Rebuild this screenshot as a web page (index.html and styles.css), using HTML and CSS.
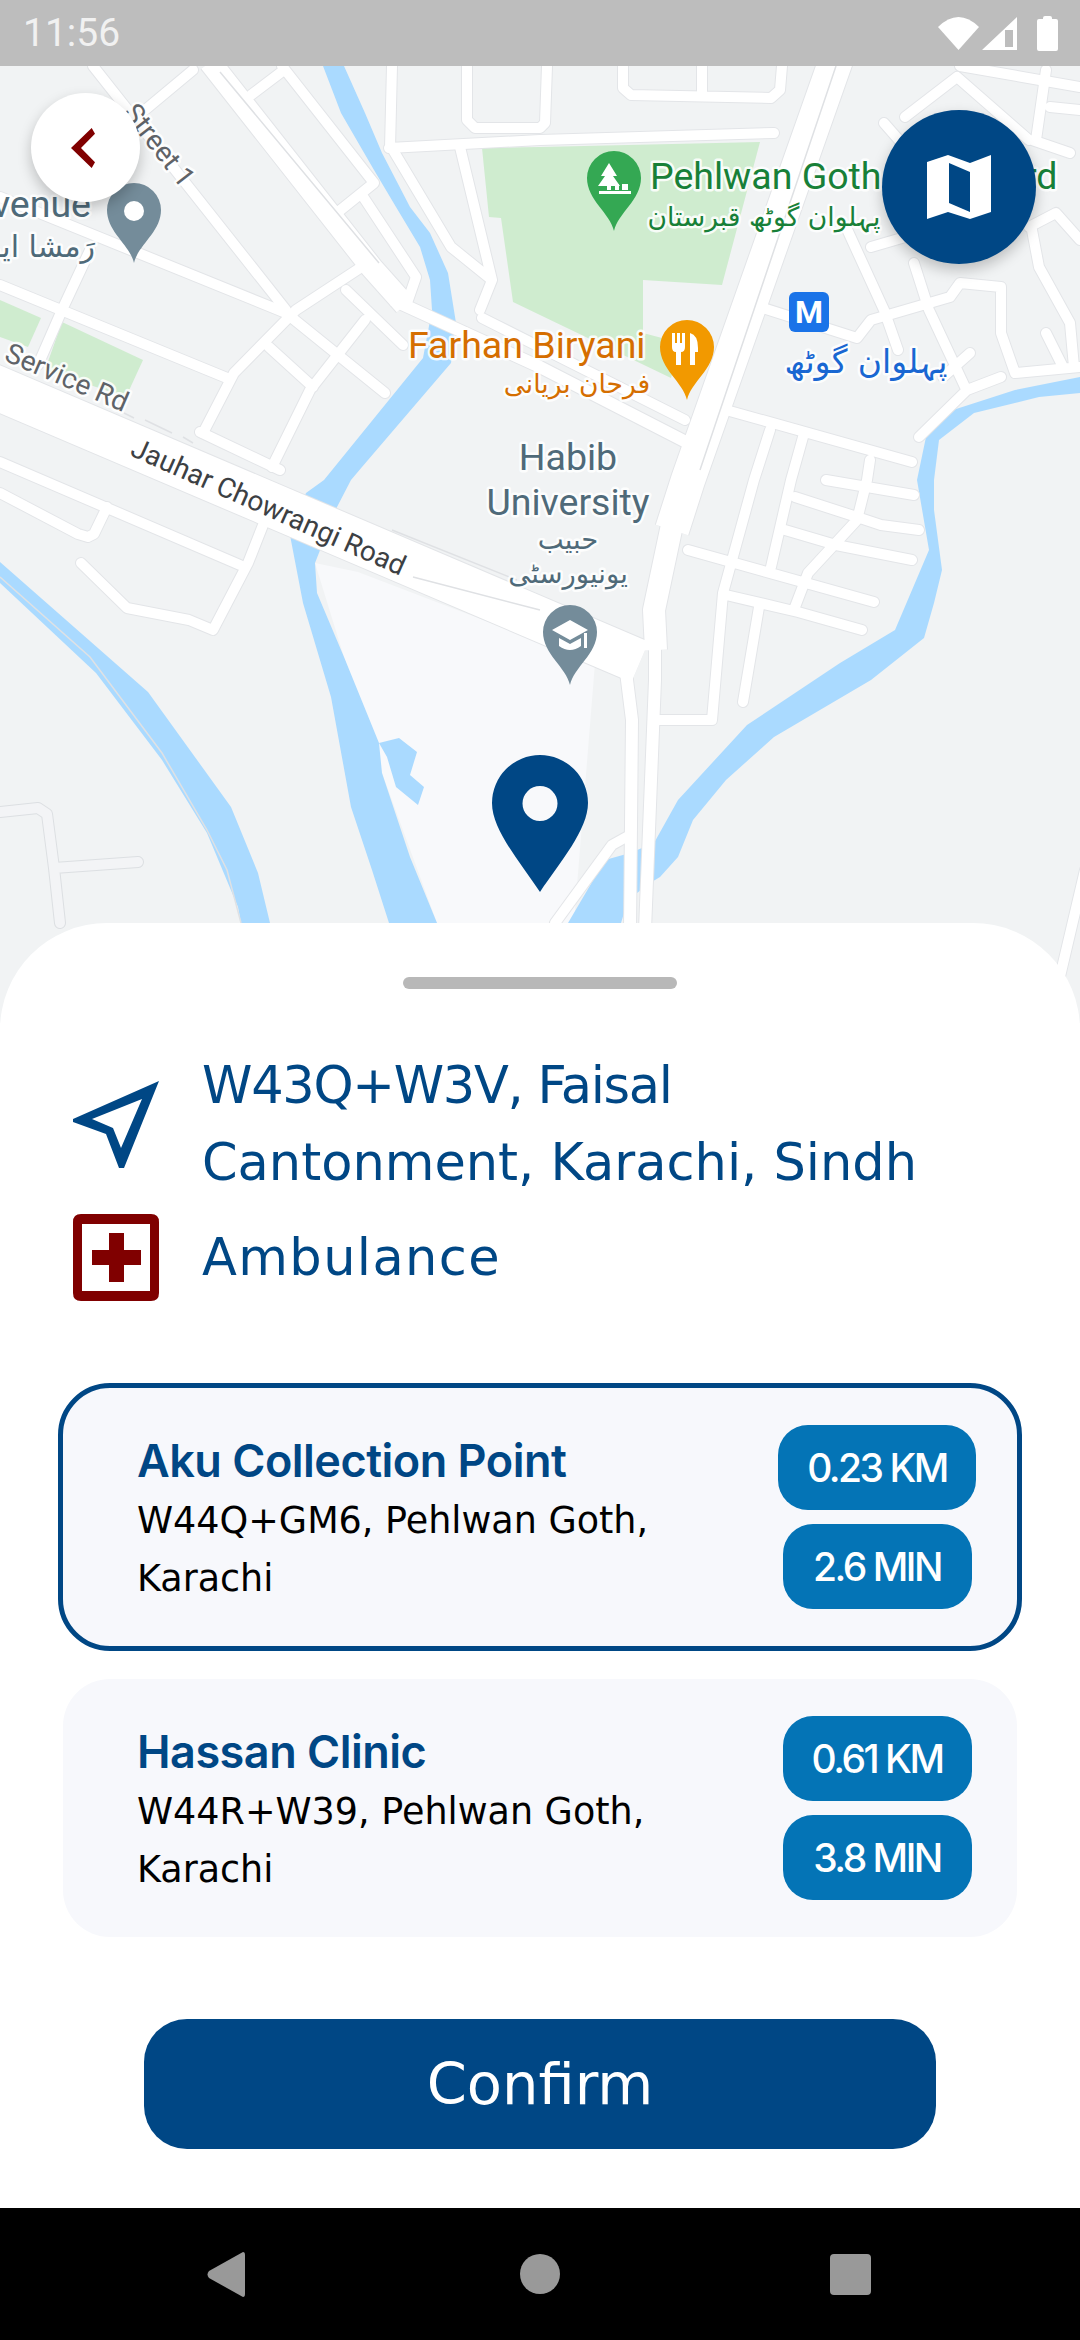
FILE: index.html
```html
<!DOCTYPE html>
<html lang="en">
<head>
<meta charset="utf-8">
<title>Select hospital</title>
<link rel="stylesheet" href="styles.css">
</head>
<body>
<div class="phone">
  <header class="status">
    <span class="time">11:56</span>
    <div class="status-icons">
      <svg class="wifi" viewBox="0 0 41 33"><path d="M0 10Q20.500-10 41 10L20.500 33Z"/></svg>
      <svg class="signal" viewBox="0 0 35 33"><path fill-rule="evenodd" d="M0 33L35 0V33ZM23 13V30H31V13Z"/></svg>
      <svg class="battery" viewBox="0 0 21 35"><path d="M6 2Q6 0 8 0H13Q15 0 15 2V3H19Q21 3 21 5V33Q21 35 19 35H2Q0 35 0 33V5Q0 3 2 3H6Z"/></svg>
    </div>
  </header>

  <section class="map">
    <svg class="map-canvas" viewBox="0 66 1080 957">
      <rect class="land" x="0" y="66" width="1080" height="957"/>
      <g class="park">
        <path d="M482 148L489 217L501 218L513 302L540 315L671 378L681 343L643 333L643 280L722 285L760 142L540 147Z"/>
        <path d="M0 300L41 318L28 347L0 337Z"/>
        <path d="M62 322L143 360L126 397L45 370Z"/>
      </g>
      <path class="campus" d="M315 563L358 572L595 663L574 923L437 923L382 773L344 657Z"/>
      <g class="water">
        <path d="M323 66L341 113L374 170L396 207L420 247L430 280L432 310L423 358L324 480L306 493L289 530L303 603L331 697L351 807L372 870L389 923L437 923L410 857L382 773L379 743L344 657L317 593L315 563L337 507L351 480L362 467L451 363L456 323L448 273L430 233L410 207L382 153L365 113L344 66Z"/>
        <path d="M379 743L399 738L417 752L410 775L424 787L418 805L396 787L387 757Z"/>
        <path d="M0 562L148 692L231 807L258 873L270 923L241 923L238 907L207 833L162 760L96 673L0 583Z"/>
        <path d="M568 923L605 860L630 853L654 843L678 800L747 725L840 663L895 630L929 550L917 480L926 437L953 410L1015 390L1080 377L1080 393L1039 397L974 413L939 440L934 480L934 510L942 570L934 603L924 638L871 680L774 737L726 780L693 820L678 857L660 877L650 883L628 900L621 923Z"/>
      </g>
      <path class="hair" d="M0 577L90 657L162 753L207 830L227 870L241 923"/>

      <g class="minor-case"><path d="M0 812L38 808L47 814L54 868L138 862M54 868L60 923"/></g>
      <g class="minor"><path d="M0 812L38 808L47 814L54 868L138 862M54 868L60 923"/></g>

      <defs>
        <g id="streets">
          <path d="M282 66L374 183M374 183L338 212M362 195L416 277L408 300M284 70L251 95"/>
          <path d="M93 66L286 310M193 70L145 110M0 197L286 313L385 393"/>
          <path d="M360 268L296 310L234 373L203 433M90 250L62 310L38 365M0 285L227 378M269 347L313 387M365 320L310 390L272 467M346 290L403 345"/>
          <path d="M0 462L240 565M0 493L78 534L88 537L94 534L107 507M265 520L248 563L213 630L189 620L127 608L81 563M200 432L280 470"/>
          <path d="M389 148L540 140L774 133M392 66L390 148M467 66L467 120L475 128L540 128L545 123L547 66M623 66L623 88L631 95L771 98L780 90L782 66M702 66L702 92"/>
          <path d="M393 150L451 247L492 280L480 310M460 147L492 280M482 318L685 420"/>
          <path d="M630 835L612 845L555 923"/>
          <path d="M770 430L754 480L723 593L712 720L657 720M803 437L791 480L771 567M688 550L874 602M726 595L798 612L862 630M759 607L743 702M795 497L857 517L881 525L919 530M785 530L836 545L912 560M826 480L914 495M867 480L857 520L808 573L795 607M726 410L912 462M870 460L867 480"/>
          <path d="M760 307L857 338L871 320L950 297L960 283L1001 287L1001 333L1015 373L1080 367M846 227L884 310L898 350M914 263L929 310L965 387M905 117L957 77L1029 140M960 66L1080 87M1046 70L1036 140M1050 107L1080 110M1032 140L1070 153M884 123L905 147M1029 227L1056 213L1080 240M1032 230L1039 267L1070 323L1074 367M1046 333L1063 367M1001 377L967 390L919 437M970 353L943 377M871 247L919 233"/>
          <path d="M1085 870L1058 985"/>
        </g>
        <path id="art12" d="M393 300L540 367L688 443M655 640L655 680L645 930M622 640L632 720L630 930"/>
        <path id="art22" d="M210 62L372 268L405 305M672 525L654 610L656 650"/>
        <path id="art34" d="M836 60L688 480L672 530"/>
        <path id="art44" d="M-10 385L640 662"/>
        <path id="pin" d="M0 53C-4 35-27 22-27 0A27 27 0 0 1 27 0C27 22 4 35 0 53Z"/>
      </defs>

      <use class="street-case" href="#streets"/>
      <use class="art-case w12" href="#art12"/>
      <use class="art-case w22" href="#art22"/>
      <use class="art-case w34" href="#art34"/>
      <use class="art-case w44" href="#art44"/>
      <use class="street" href="#streets"/>
      <use class="art w12" href="#art12"/>
      <use class="art w22" href="#art22"/>
      <use class="art w34" href="#art34"/>
      <use class="art w44" href="#art44"/>
      <path class="hair" d="M220 72L379 263M124 413L134 418M145 420L172 433M183 437L193 443M392 530L517 580M413 577L540 610M836 66L700 470"/>

      <text class="lbl road" transform="translate(122 113) rotate(52)">Street 1</text>
      <text class="lbl road" transform="translate(3 360) rotate(23.500)">Service Rd</text>
      <text class="lbl road dark" transform="translate(129 455) rotate(24)">Jauhar Chowrangi Road</text>

      <text class="lbl poi slate" x="91" y="217" text-anchor="end">Avenue</text>
      <text class="lbl ur slate wide" x="95" y="257">رَمشا ایونیو</text>

      <text class="lbl poi green" x="650" y="189">Pehlwan Goth Graveyard</text>
      <text class="lbl ur green" x="764" y="226" text-anchor="middle">پہلوان گوٹھ قبرستان</text>

      <text class="lbl poi orange" x="408" y="358">Farhan Biryani</text>
      <text class="lbl ur orange" x="577" y="393" text-anchor="middle">فرحان بریانی</text>

      <text class="lbl poi slate" x="568" y="470" text-anchor="middle">Habib</text>
      <text class="lbl poi slate" x="568" y="515" text-anchor="middle">University</text>
      <text class="lbl ur slate small" x="568" y="549" text-anchor="middle">حبیب</text>
      <text class="lbl ur slate small" x="568" y="583" text-anchor="middle">یونیورسٹی</text>

      <text class="lbl ur blue big" x="866" y="373" text-anchor="middle">پہلوان گوٹھ</text>
      <rect class="metro" x="789" y="292" width="40" height="40" rx="6"/>
      <text class="metro-m" x="809" y="323" text-anchor="middle">M</text>

      <use class="pin-grey" href="#pin" x="134" y="210"/>
      <circle class="pin-hole" cx="134" cy="211" r="10"/>

      <use class="pin-green" href="#pin" x="614" y="178"/>
      <path class="pin-hole" d="M609 163L617 176H613L620 186H611V190H607V186H598L605 176H601ZM599 191H631V194H599ZM615 184H619V190H615ZM622 184H628V190H622Z"/>

      <use class="pin-orange" href="#pin" x="687" y="347"/>
      <path class="pin-hole" d="M672 333H675V343H677V333H680V343H682V333H685V347Q685 352 681 352V365H676V352Q672 352 672 347ZM690 333Q698 335 698 348V352H695V365H690Z"/>

      <use class="pin-grey" href="#pin" x="570" y="632"/>
      <path class="pin-hole" d="M570 620L588 630L570 640L552 630ZM559 638L570 644L581 638V646Q570 654 559 646ZM584 633H587V648H584Z"/>

      <path class="pin-main" fill-rule="evenodd" d="M540 892C520 862 492 830 492 803A48 48 0 0 1 588 803C588 830 560 862 540 892ZM540 786A17.500 17.500 0 1 0 540 821A17.500 17.500 0 1 0 540 786Z"/>
    </svg>

    <button class="back-btn" type="button" aria-label="Back">
      <svg class="chev" viewBox="0 0 24 40"><path d="M0 20L20.700 0L24 5.700L10 20L24 34.300L20.700 40Z"/></svg>
    </button>
    <button class="layers-btn" type="button" aria-label="Map view">
      <svg class="map-icon" viewBox="0 0 64 64"><path fill-rule="evenodd" d="M0 7L21 0L43 8L64 0V57L43 64L21 57L0 64ZM22 8V48L43 57V17Z"/></svg>
    </button>
  </section>

  <main class="sheet">
    <div class="handle"></div>

    <div class="place place-addr">
      <svg class="nav-icon" viewBox="0 0 86 87"><path fill-rule="evenodd" d="M86 0L0 38V41L33 53L46 87H51ZM69 18L19 38L40 47L48 67Z"/></svg>
      <p class="place-text"><span class="line-a">W43Q+W3V, Faisal</span><br>Cantonment, Karachi, Sindh</p>
    </div>
    <div class="place place-type">
      <svg class="cross-icon" viewBox="0 0 86 87"><path fill-rule="evenodd" d="M8 0H78Q86 0 86 8V79Q86 87 78 87H8Q0 87 0 79V8Q0 0 8 0ZM9 10V77H77V10Z"/><path d="M36 19H51V36H68V51H51V68H36V51H19V36H36Z"/></svg>
      <p class="place-text line-c">Ambulance</p>
    </div>

    <div class="cards">
      <article class="card card-selected">
        <div class="card-info">
          <h2 class="card-name">Aku Collection Point</h2>
          <p class="card-addr">W44Q+GM6, Pehlwan Goth, Karachi</p>
        </div>
        <div class="pills">
          <span class="pill">0.23 KM</span>
          <span class="pill">2.6 MIN</span>
        </div>
      </article>
      <article class="card">
        <div class="card-info">
          <h2 class="card-name">Hassan Clinic</h2>
          <p class="card-addr">W44R+W39, Pehlwan Goth, Karachi</p>
        </div>
        <div class="pills">
          <span class="pill">0.61 KM</span>
          <span class="pill">3.8 MIN</span>
        </div>
      </article>
    </div>

    <button class="confirm" type="button">Confirm</button>
  </main>

  <footer class="navbar">
    <svg class="nav-back" viewBox="0 0 38 45"><path d="M36 0Q38 0 38 3V42Q38 45 36 45L2 26Q-1 22.500 2 19Z"/></svg>
    <span class="nav-home"></span>
    <span class="nav-recent"></span>
  </footer>
</div>
</body>
</html>
```

FILE: styles.css
```css
* { box-sizing: border-box; }
html, body { margin: 0; padding: 0; }
body { width: 1080px; height: 2340px; overflow: hidden; background: #fff; font-family: "Inter", "Liberation Sans", sans-serif; }
.phone { width: 1080px; height: 2340px; display: flex; flex-direction: column; }

/* status bar */
.status { height: 66px; flex: none; background: #bdbdbd; display: flex; align-items: center; justify-content: space-between; padding: 0 22px 0 23px; }
.time { font: 400 39px/66px "Roboto", sans-serif; color: #f1f1f1; }
.status-icons { display: flex; align-items: center; }
.status-icons svg { fill: #fff; display: block; }
.wifi { width: 41px; height: 33px; margin-right: 3px; }
.signal { width: 35px; height: 33px; margin-right: 20px; }
.battery { width: 21px; height: 35px; }

/* map */
.map { position: relative; height: 957px; flex: none; }
.map-canvas { display: block; width: 1080px; height: 957px; }
.land { fill: #f1f3f4; }
.park { fill: #cfeccf; }
.campus { fill: #f8f9fb; }
.water { fill: #aadaff; }
.hair { fill: none; stroke: #dfe1e4; stroke-width: 1.500px; }
.minor-case, .minor { fill: none; stroke-linejoin: round; stroke-linecap: round; }
.minor-case { stroke: #dcdfe2; stroke-width: 12px; }
.minor { stroke: #f3f4f6; stroke-width: 10px; }
.street-case, .street, .art-case, .art { fill: none; stroke-linejoin: round; }
.street-case, .street { stroke-linecap: round; }
.street-case { stroke: #e3e5e8; stroke-width: 12px; }
.street { stroke: #fff; stroke-width: 10px; }
.art-case { stroke: #e3e5e8; }
.art { stroke: #fff; }
.art-case.w12 { stroke-width: 14px; } .art.w12 { stroke-width: 12px; }
.art-case.w22 { stroke-width: 24px; } .art.w22 { stroke-width: 22px; }
.art-case.w34 { stroke-width: 36px; } .art.w34 { stroke-width: 34px; }
.art-case.w44 { stroke-width: 46px; } .art.w44 { stroke-width: 44px; }

.lbl { paint-order: stroke; stroke: #fff; stroke-opacity: .85; stroke-width: 5px; stroke-linejoin: round; }
.poi { font: 400 37.500px "Roboto", sans-serif; }
.road { font: 400 28px "Roboto", sans-serif; fill: #5f6368; }
.road.dark { fill: #3c4043; }
.ur { font: 400 26.500px "DejaVu Sans", sans-serif; direction: rtl; unicode-bidi: plaintext; }
.ur.small { font-size: 27.500px; }
.ur.big { font-size: 33px; }
.ur.wide { font-size: 30px; }
.slate { fill: #4f6a79; }
.green { fill: #188038; }
.orange { fill: #d56e00; }
.blue { fill: #1967d2; }
.metro { fill: #1a73e8; }
.metro-m { font: 700 32px "Roboto", sans-serif; fill: #fff; }
.pin-grey { fill: #748c9a; }
.pin-green { fill: #34a853; }
.pin-orange { fill: #f29900; }
.pin-hole { fill: #fff; }
.pin-main { fill: #004785; }

.back-btn, .layers-btn { position: absolute; border: 0; padding: 0; border-radius: 50%; display: flex; align-items: center; justify-content: center; box-shadow: 0 6px 14px rgba(0,0,0,.22); }
.back-btn { left: 31px; top: 27px; width: 109px; height: 109px; background: #fff; }
.layers-btn { left: 882px; top: 44px; width: 154px; height: 154px; background: #004785; }
.chev { width: 24px; height: 40px; fill: #800000; margin-right: 6px; }
.map-icon { width: 64px; height: 64px; fill: #fff; }

/* sheet */
.sheet { position: relative; flex: 1; margin-top: -100px; background: #fff; border-radius: 107px 107px 0 0; padding-top: 54px; display: flex; flex-direction: column; }
.handle { width: 274px; height: 12px; border-radius: 6px; background: #b8b8b8; margin: 0 auto 58px; }
.place { display: flex; align-items: center; gap: 43px; padding-left: 73px; }
.place-type { margin-top: 13px; height: 87px; }
.place-text { margin: 0; font: 400 51px/77px "DejaVu Sans", sans-serif; color: #004785; }
.line-a { letter-spacing: -1.300px; }
.line-c { letter-spacing: 1.400px; }
.nav-icon { width: 86px; height: 87px; fill: #004785; flex: none; }
.cross-icon { width: 86px; height: 87px; fill: #800000; flex: none; }

.cards { margin-top: 82px; padding: 0 58px; display: flex; flex-direction: column; gap: 28px; }
.card { margin: 0 5px; background: #f7f8fc; border-radius: 47px; padding: 37px 41px 37px 74px; display: flex; justify-content: space-between; }
.card-selected { margin: 0; border: 5px solid #004785; border-radius: 52px; }
.card-info { width: 530px; padding-top: 4px; }
.card-name { margin: 0; font: 600 45px/63px "Inter", sans-serif; color: #004785; letter-spacing: -.5px; }
.card-addr { margin: 0; font: 400 36.500px/58px "DejaVu Sans", sans-serif; color: #000; }
.pills { width: 198px; display: flex; flex-direction: column; align-items: center; gap: 14px; }
.pill { min-width: 189px; height: 85px; padding: 0 29px; border-radius: 30px; background: #0474b6; color: #fff; font: 500 39px/85px "Inter", sans-serif; letter-spacing: -2.500px; text-align: center; white-space: nowrap; }

.confirm { width: 792px; height: 130px; flex: none; margin: 82px auto 0; border: 0; border-radius: 43px; background: #004785; color: #fff; font: 400 57.500px "DejaVu Sans", sans-serif; }

/* nav bar */
.navbar { height: 132px; flex: none; background: #000; display: flex; align-items: center; padding-left: 207px; }
.nav-back { width: 38px; height: 45px; fill: #999; }
.nav-home { width: 40px; height: 40px; border-radius: 50%; background: #999; margin-left: 275px; }
.nav-recent { width: 41px; height: 41px; border-radius: 4px; background: #999; margin-left: 270px; }
```
